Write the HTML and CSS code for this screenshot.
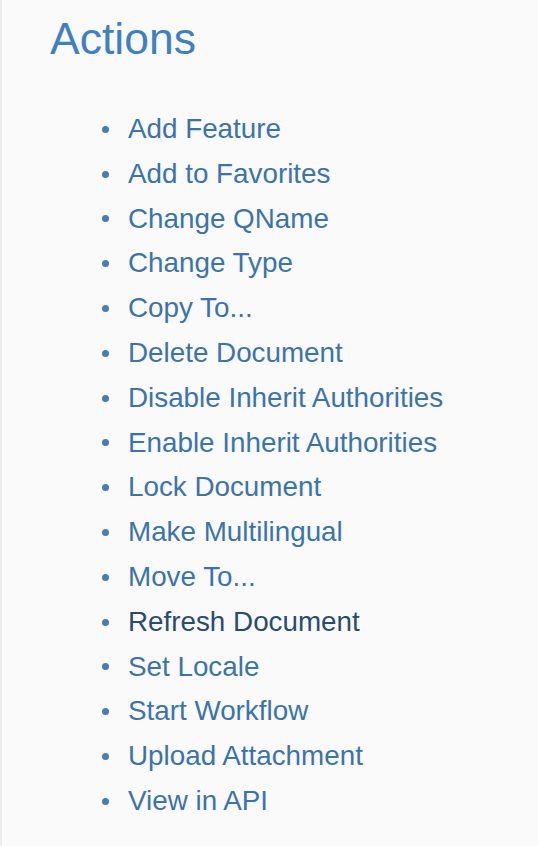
FILE: index.html
```html
<!DOCTYPE html>
<html lang="en">
<head>
<meta charset="utf-8">
<title>Actions</title>
<link rel="stylesheet" href="styles.css">
</head>
<body>
<div class="panel">
  <h1 class="panel-title">Actions</h1>
  <ul class="action-list">
    <li class="action-item"><a class="action-link" href="#">Add Feature</a></li>
    <li class="action-item"><a class="action-link" href="#">Add to Favorites</a></li>
    <li class="action-item"><a class="action-link" href="#">Change QName</a></li>
    <li class="action-item"><a class="action-link" href="#">Change Type</a></li>
    <li class="action-item"><a class="action-link" href="#">Copy To...</a></li>
    <li class="action-item"><a class="action-link" href="#">Delete Document</a></li>
    <li class="action-item"><a class="action-link" href="#">Disable Inherit Authorities</a></li>
    <li class="action-item"><a class="action-link" href="#">Enable Inherit Authorities</a></li>
    <li class="action-item"><a class="action-link" href="#">Lock Document</a></li>
    <li class="action-item"><a class="action-link" href="#">Make Multilingual</a></li>
    <li class="action-item"><a class="action-link" href="#">Move To...</a></li>
    <li class="action-item"><a class="action-link is-hover" href="#">Refresh Document</a></li>
    <li class="action-item"><a class="action-link" href="#">Set Locale</a></li>
    <li class="action-item"><a class="action-link" href="#">Start Workflow</a></li>
    <li class="action-item"><a class="action-link" href="#">Upload Attachment</a></li>
    <li class="action-item"><a class="action-link" href="#">View in API</a></li>
  </ul>
</div>
</body>
</html>
```

FILE: styles.css
```css
html, body {
  margin: 0;
  padding: 0;
  height: 100%;
}

body {
  background: #fafafa;
  font-family: "Liberation Sans", Arial, sans-serif;
}

.panel {
  box-sizing: border-box;
  min-height: 100%;
  border-left: 2px solid #ebebeb;
  padding-top: 15px;
}

.panel-title {
  margin: 0;
  padding-left: 48px;
  font-size: 44.5px;
  line-height: 48px;
  font-weight: normal;
  color: #3f80c2;
}

.action-list {
  list-style: none;
  margin: 44px 0 0;
  padding: 0 0 0 100px;
}

.action-item {
  display: flex;
  align-items: center;
  height: 44.8px;
  font-size: 27.8px;
  line-height: 44.8px;
}

.action-item::before {
  content: "";
  flex: 0 0 7px;
  width: 7px;
  height: 7px;
  border-radius: 50%;
  background: #467cb8;
  margin-right: 19px;
}

.action-link {
  color: #3b73af;
  text-decoration: none;
  white-space: nowrap;
}

.action-link.is-hover {
  color: #2a4b71;
}
```
